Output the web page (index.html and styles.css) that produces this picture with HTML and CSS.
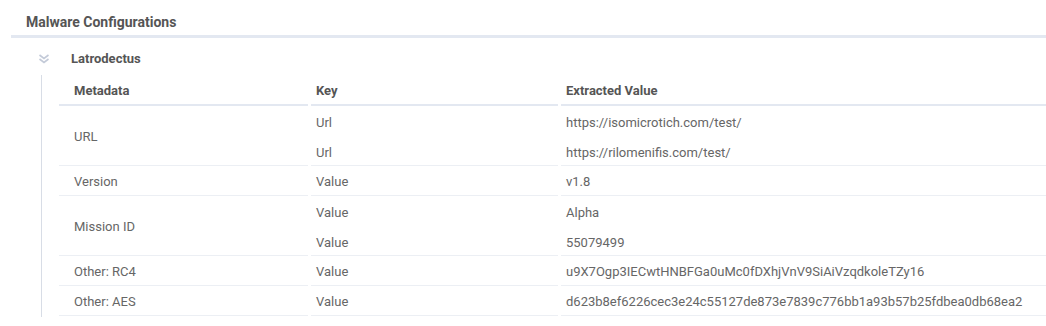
FILE: index.html
```html
<!DOCTYPE html>
<html>
<head>
<meta charset="utf-8">
<link rel="stylesheet" href="styles.css">
</head>
<body>
<section class="panel">
  <div class="panel-title">Malware Configurations</div>
  <div class="panel-bar"></div>
  <div class="family">
    <div class="family-head">
      <svg class="chev" width="12" height="10" viewBox="0 0 12 10"><polyline points="1.5,1 6,4.5 10.5,1" fill="none" stroke="#c3cad8" stroke-width="1.6"/><polyline points="1.5,5 6,8.5 10.5,5" fill="none" stroke="#c3cad8" stroke-width="1.6"/></svg>
      <span class="family-name">Latrodectus</span>
    </div>
    <div class="family-body">
      <table class="cfg">
        <thead>
          <tr><th class="c-meta">Metadata</th><th class="c-key">Key</th><th class="c-val">Extracted Value</th></tr>
        </thead>
        <tbody>
          <tr class="sub"><td class="c-meta end" rowspan="2">URL</td><td>Url</td><td>https://isomicrotich.com/test/</td></tr>
          <tr><td class="end low">Url</td><td class="end low">https://rilomenifis.com/test/</td></tr>
          <tr><td class="c-meta end">Version</td><td class="end">Value</td><td class="end">v1.8</td></tr>
          <tr class="sub"><td class="c-meta end" rowspan="2">Mission ID</td><td>Value</td><td>Alpha</td></tr>
          <tr><td class="end low">Value</td><td class="end low">55079499</td></tr>
          <tr><td class="c-meta end">Other: RC4</td><td class="end">Value</td><td class="end">u9X7Ogp3IECwtHNBFGa0uMc0fDXhjVnV9SiAiVzqdkoleTZy16</td></tr>
          <tr><td class="c-meta end">Other: AES</td><td class="end">Value</td><td class="end">d623b8ef6226cec3e24c55127de873e7839c776bb1a93b57b25fdbea0db68ea2</td></tr>
        </tbody>
      </table>
    </div>
  </div>
</section>
</body>
</html>
```

FILE: styles.css
```css
html, body {
  margin: 0;
  padding: 0;
  background: #ffffff;
}
body {
  font-family: Roboto, "Liberation Sans", sans-serif;
  color: #666666;
  width: 1046px;
  overflow: hidden;
}
.panel-title {
  padding: 14px 0 0 26px;
  height: 21px;
  line-height: 16px;
  font-size: 14px;
  font-weight: 700;
  color: #555555;
}
.panel-bar {
  margin-left: 11px;
  height: 3px;
  background: #e3e8f1;
}
.family-head {
  display: flex;
  align-items: center;
  padding: 13px 0 0 38px;
  height: 16px;
  margin-bottom: 8px;
}
.chev {
  display: block;
  width: 12px;
  height: 10px;
}
.family-name {
  margin-left: 21px;
  font-size: 13px;
  font-weight: 700;
  color: #555555;
  line-height: 16px;
}
.family-body {
  margin-left: 41px;
  border-left: 1px solid #d8dde6;
  padding-bottom: 1px;
}
.cfg {
  border-collapse: separate;
  border-spacing: 3px 0;
  margin-left: 14px;
  width: 1000px;
  font-size: 13px;
  table-layout: fixed;
}
.cfg th {
  text-align: left;
  font-weight: 700;
  color: #555555;
  height: 27px;
  padding: 2px 0 0 5px;
  border-bottom: 2px solid #e3e8f1;
  vertical-align: middle;
}
.cfg td {
  height: 28px;
  padding: 2px 0 0 5px;
  vertical-align: middle;
  white-space: nowrap;
}
.cfg td.end {
  height: 27px;
  border-bottom: 1px solid #eceff4;
}
.cfg td.low {
  height: 25px;
  padding-top: 4px;
}
.cfg .c-meta {
  padding-left: 15px;
  width: 234px;
}
.cfg .c-key {
  width: 242px;
}
```
